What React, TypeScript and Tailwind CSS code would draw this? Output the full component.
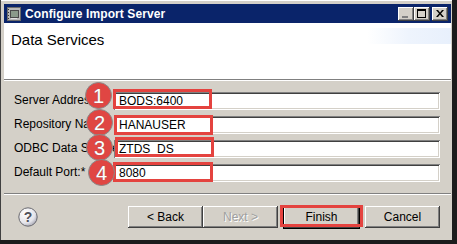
import React from "react";

const raised =
  "shadow-[inset_-1px_-1px_#404040,inset_1px_1px_#ffffff,inset_-2px_-2px_#808080,inset_2px_2px_#d4d0c8]";
const sunken =
  "shadow-[inset_1px_1px_#808080,inset_-1px_-1px_#ffffff,inset_2px_2px_#404040,inset_-2px_-2px_#d4d0c8]";

function Row({ label, value }: { label: string; value: string }) {
  return (
    <div className="flex items-center h-[18px]">
      <div className="w-[100px] text-[12px] leading-[14px] whitespace-nowrap overflow-hidden text-black -mt-[2px]">
        {label}
      </div>
      <div className={`flex-1 h-[18px] bg-white ${sunken} flex items-center pl-[5px] text-[12px] text-black`}>
        {value}
      </div>
    </div>
  );
}

function Btn({ children, disabled, def }: { children: React.ReactNode; disabled?: boolean; def?: boolean }) {
  return (
    <div
      className={`w-[75px] h-[22px] flex items-center justify-center text-[12px] bg-[#d4d0c8] ${raised} ${
        disabled ? "text-[#a0a0a0] [text-shadow:1px_1px_#ffffff]" : "text-black"
      } ${def ? "outline outline-1 outline-black" : ""}`}
    >
      {children}
    </div>
  );
}

function Circle({ n, x, y }: { n: string; x: number; y: number }) {
  return (
    <div
      className="absolute w-[27px] h-[27px] rounded-full bg-[#e04643] border border-[#8a8a8a] flex items-center justify-center text-white text-[20px] leading-none font-['Liberation_Sans',Arial,sans-serif] [text-shadow:0_0_1px_#777]"
      style={{ left: x, top: y }}
    >
      {n}
    </div>
  );
}

function Box({ x, y, w, h }: { x: number; y: number; w: number; h: number }) {
  return <div className="absolute border-[3px] border-[#e4433f]" style={{ left: x, top: y, width: w, height: h }} />;
}

export default function App() {
  return (
    <div className="relative w-[457px] h-[244px] bg-[#1c1c1c] overflow-hidden font-['Liberation_Sans',Arial,sans-serif]">
      <div className="flex flex-col w-[452px] h-[240px] bg-[#d4d0c8] border-l border-l-[#404040] pl-[3px] pr-[1px] pt-[4px] shadow-[inset_0_1px_#ffffff]">
        {/* Title bar */}
        <div className="h-[19px] bg-[#0a246a] flex items-center pl-[2px] pr-[3px]">
          <svg width="16" height="16" viewBox="0 0 16 16" className="shrink-0">
            <rect x="1" y="1" width="14" height="14" fill="#6b6b6b" />
            <rect x="2" y="2" width="12" height="12" fill="#b9b9b9" />
            <rect x="4" y="4" width="9" height="8" fill="#4a4a4a" />
            <rect x="5" y="5" width="7" height="6" fill="#8a9a8a" />
            <rect x="2" y="3" width="1" height="1" fill="#333" />
            <rect x="2" y="6" width="1" height="1" fill="#333" />
            <rect x="2" y="9" width="1" height="1" fill="#333" />
            <rect x="2" y="12" width="1" height="1" fill="#333" />
            <rect x="5" y="12" width="6" height="1" fill="#e0e0e0" />
          </svg>
          <div className="ml-[3px] text-white font-bold text-[12px] leading-none tracking-[0.1px]">Configure Import Server</div>
          <div className="ml-auto flex items-center">
            <div className={`w-[16px] h-[14px] bg-[#d4d0c8] ${raised} relative`}>
              <div className="absolute left-[4px] top-[9px] w-[6px] h-[2px] bg-[#808080]" />
            </div>
            <div className={`w-[16px] h-[14px] bg-[#d4d0c8] ${raised} relative`}>
              <div className="absolute left-[3px] top-[2px] w-[9px] h-[9px] border border-black border-t-2" />
            </div>
            <div className={`ml-[2px] w-[16px] h-[14px] bg-[#d4d0c8] ${raised} flex items-center justify-center`}>
              <svg width="8" height="7" viewBox="0 0 8 7">
                <path d="M0 0h2l2 2.5L6 0h2L5 3.5 8 7H6L4 4.5 2 7H0l3-3.5z" fill="#000" />
              </svg>
            </div>
          </div>
        </div>
        {/* Header */}
        <div className="relative h-[56px] bg-white pl-[7px] pt-[8px]">
          <div className="text-[15px] leading-[17px] text-black">Data Services</div>
          <div className="absolute left-[363px] top-[5px] w-[84px] h-[16px] bg-gradient-to-r from-white via-[#eef4fd] to-[#e8f0fc]" />
        </div>
        <div className="h-[2px] border-t border-t-[#808080] border-b border-b-white" />
        {/* Body */}
        <div className="flex-1 flex flex-col">
          <div className="flex flex-col gap-[6px] pt-[11px] pl-[10px] pr-[11px]">
            <Row label="Server Address:" value="BODS:6400" />
            <Row label="Repository Name:" value="HANAUSER" />
            <Row label="ODBC Data Source:" value="ZTDS_DS" />
            <Row label="Default Port:*" value="8080" />
          </div>
          <div className="mt-[11px] h-[2px] border-t border-t-[#808080] border-b border-b-white" />
          <div className="flex items-center pt-[11px] pl-[14px] pr-[11px]">
            <svg width="20" height="20" viewBox="0 0 20 20" className="shrink-0">
              <defs>
                <radialGradient id="hg" cx="35%" cy="30%" r="75%">
                  <stop offset="0%" stopColor="#ffffff" />
                  <stop offset="70%" stopColor="#e4e4ea" />
                  <stop offset="100%" stopColor="#a8a8b4" />
                </radialGradient>
              </defs>
              <circle cx="10" cy="10" r="9.2" fill="url(#hg)" stroke="#6a6a70" strokeWidth="1" />
              <text x="10" y="15" textAnchor="middle" fontSize="14" fontWeight="bold" fill="#50505a" fontFamily="Liberation Sans, Arial, sans-serif">?</text>
            </svg>
            <div className="ml-auto flex items-center">
              <Btn>&lt; Back</Btn>
              <Btn disabled>Next &gt;</Btn>
              <div className="ml-[6px]">
                <Btn def>Finish</Btn>
              </div>
              <div className="ml-[6px]">
                <Btn>Cancel</Btn>
              </div>
            </div>
          </div>
        </div>
      </div>

      {/* Annotations */}
      <Box x={113} y={89} w={99} h={20} />
      <Box x={114} y={115} w={99} h={20} />
      <Box x={115} y={137} w={99} h={20} />
      <Box x={113} y={162} w={100} h={20} />
      <Box x={280} y={205} w={83} h={22} />
      <Circle n="1" x={85} y={82} />
      <Circle n="2" x={86} y={109} />
      <Circle n="3" x={86} y={134} />
      <Circle n="4" x={88} y={159} />
    </div>
  );
}
